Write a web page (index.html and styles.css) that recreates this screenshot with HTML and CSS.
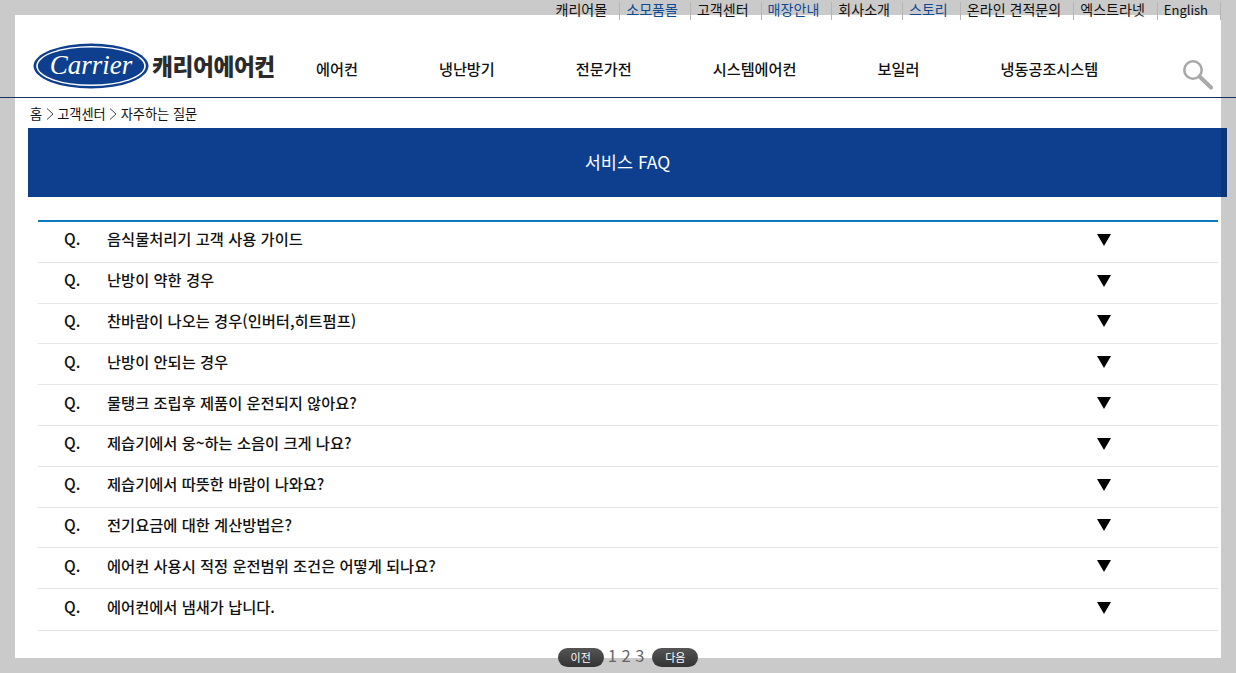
FILE: index.html
```html
<!DOCTYPE html>
<html lang="ko">
<head>
  <meta charset="UTF-8">
  <title>서비스 FAQ</title>
  <link rel="stylesheet" href="styles.css">
</head>
<body>
  <nav class="util-nav">
    <a href="#">캐리어몰</a>
    <a href="#" class="blue">소모품몰</a>
    <a href="#">고객센터</a>
    <a href="#" class="blue">매장안내</a>
    <a href="#">회사소개</a>
    <a href="#" class="blue">스토리</a>
    <a href="#">온라인 견적문의</a>
    <a href="#">엑스트라넷</a>
    <a href="#" class="en">English</a>
  </nav>

  <div class="panel">
    <header class="site-header">
      <a href="#" class="logo">
        <svg width="116" height="46" viewBox="0 0 116 46">
          <ellipse cx="58" cy="23" rx="57.5" ry="22.5" fill="#0e3f8f"/>
          <ellipse cx="58" cy="23" rx="54.8" ry="20" fill="#fff"/>
          <ellipse cx="58" cy="23" rx="53.2" ry="18.6" fill="#0e3f8f"/>
          <text x="58" y="31" class="logo-word" text-anchor="middle">Carrier</text>
        </svg>
        <span class="logo-name">캐리어에어컨</span>
      </a>
      <ul class="main-nav">
        <li>에어컨</li>
        <li>냉난방기</li>
        <li>전문가전</li>
        <li>시스템에어컨</li>
        <li>보일러</li>
        <li>냉동공조시스템</li>
      </ul>
      <svg class="search-icon" width="30" height="30" viewBox="0 0 30 30">
        <circle cx="10" cy="10" r="8.7" fill="none" stroke="#a9a9a9" stroke-width="2.6"/>
        <path d="M16.5 16.5 L28 27.5" stroke="#a9a9a9" stroke-width="4" stroke-linecap="round"/>
      </svg>
    </header>

    <div class="crumbs">
      <span>홈</span>
      <svg class="gt" width="8" height="12" viewBox="0 0 8 12"><path d="M1 .5 7 6 1 11.5"/></svg>
      <span>고객센터</span>
      <svg class="gt" width="8" height="12" viewBox="0 0 8 12"><path d="M1 .5 7 6 1 11.5"/></svg>
      <span>자주하는 질문</span>
    </div>

    <h1 class="banner">서비스 FAQ</h1>

    <ul class="faq">
      <li><b>Q.</b><span>음식물처리기 고객 사용 가이드</span><i></i></li>
      <li><b>Q.</b><span>난방이 약한 경우</span><i></i></li>
      <li><b>Q.</b><span>찬바람이 나오는 경우(인버터,히트펌프)</span><i></i></li>
      <li><b>Q.</b><span>난방이 안되는 경우</span><i></i></li>
      <li><b>Q.</b><span>물탱크 조립후 제품이 운전되지 않아요?</span><i></i></li>
      <li><b>Q.</b><span>제습기에서 웅~하는 소음이 크게 나요?</span><i></i></li>
      <li><b>Q.</b><span>제습기에서 따뜻한 바람이 나와요?</span><i></i></li>
      <li><b>Q.</b><span>전기요금에 대한 계산방법은?</span><i></i></li>
      <li><b>Q.</b><span>에어컨 사용시 적정 운전범위 조건은 어떻게 되나요?</span><i></i></li>
      <li><b>Q.</b><span>에어컨에서 냄새가 납니다.</span><i></i></li>
    </ul>

    <div class="pager">
      <a href="#" class="pill">이전</a>
      <span class="pages">1 2 3</span>
      <a href="#" class="pill">다음</a>
    </div>
  </div>
</body>
</html>
```

FILE: styles.css
```css
* {
  margin: 0;
  padding: 0;
  box-sizing: border-box;
}

html, body {
  height: 673px;
  overflow: hidden;
}

body {
  background: #cacaca;
  color: #111;
  font-family: "Noto Sans CJK KR", "Noto Sans", sans-serif;
  font-size: 14px;
}

a {
  color: inherit;
  text-decoration: none;
}

ul {
  list-style: none;
}

/* top links sit half on the gray */
.util-nav {
  display: flex;
  justify-content: flex-end;
  height: 15px;
  padding: 2px 15px 0 0;
  font-size: 14.05px;
  line-height: 15px;
  position: relative;
  z-index: 1;
}

.util-nav a {
  height: 18px;
  padding: 0 12px 0 6px;
  border-right: 1px solid #b5b5b5;
  white-space: nowrap;
}

.util-nav .blue {
  color: #0e4a94;
}

.util-nav .en {
  padding-right: 12px;
  font-size: 13px;
}

.panel {
  width: 1206px;
  height: 643px;
  margin-left: 15px;
  background: #fff;
}

.site-header {
  display: flex;
  align-items: flex-start;
  height: 83px;
  margin: 0 -15px;
  padding: 28px 23px 0 33px;
  border-bottom: 1px solid #16305f;
}

.logo {
  display: flex;
  align-items: center;
  gap: 3px;
  width: 283px;
}

.logo-word {
  fill: #fff;
  font-family: "Liberation Serif", serif;
  font-style: italic;
  font-size: 27px;
}

.logo-name {
  font-size: 22.7px;
  font-weight: 900;
  color: #2b2b2b;
  letter-spacing: -0.4px;
  line-height: 46px;
}

.main-nav {
  display: flex;
  gap: 81px;
  flex: 1;
  margin-top: 14px;
  font-size: 15.2px;
  font-weight: 500;
  line-height: 22px;
}

.search-icon {
  flex: none;
  margin-top: 17px;
}

.crumbs {
  display: flex;
  align-items: center;
  gap: 3.5px;
  height: 30px;
  padding: 1px 0 0 15px;
  font-size: 13.2px;
  line-height: 18px;
}

.gt {
  fill: none;
  stroke: #444;
}

.banner {
  width: 1199px;
  height: 69px;
  margin-left: 13px;
  background: linear-gradient(to right, #0e3f8f 1193px, #0c3572 1193px);
  color: #fff;
  font-size: 17.5px;
  font-weight: 400;
  line-height: 67px;
  text-align: center;
}

.faq {
  width: 1180px;
  margin: 23px 0 0 23px;
  border-top: 2px solid #0a7abf;
}

.faq li {
  display: flex;
  align-items: center;
  height: 40.8px;
  padding-bottom: 7px;
  border-bottom: 1px solid #e4e4e4;
  font-size: 15.3px;
  font-weight: 500;
}

.faq li:last-child {
  height: 41.8px;
}

.faq b {
  width: 69px;
  padding-left: 26px;
  font-size: 15.5px;
  font-weight: 500;
}

.faq span {
  flex: 1;
}

.faq i {
  width: 0;
  height: 0;
  margin: 3px 107px 0 0;
  border-style: solid;
  border-width: 12px 7.5px 0;
  border-color: #000 transparent transparent;
}

.pager {
  display: flex;
  justify-content: center;
  align-items: center;
  gap: 6px;
  margin: 16px 0 0 20px;
}

.pill {
  width: 46px;
  height: 19px;
  border-radius: 10px;
  background: linear-gradient(#555, #333);
  color: #fff;
  font-size: 11px;
  line-height: 18px;
  text-align: center;
}

.pages {
  margin: 0 2px 0 -2px;
  padding-bottom: 5px;
  font-size: 16.5px;
  color: #666;
  line-height: 16px;
}
```
